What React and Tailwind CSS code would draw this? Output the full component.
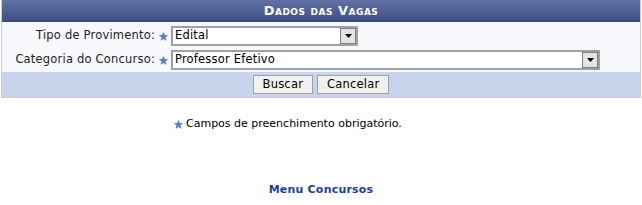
import React from "react";

const Star = ({ className = "" }) => (
  <svg width="9" height="9" viewBox="0 0 10 10" className={className}>
    <polygon
      points="5,0.5 6.2,3.6 9.5,3.8 6.9,5.9 7.8,9.3 5,7.4 2.2,9.3 3.1,5.9 0.5,3.8 3.8,3.6"
      fill="#5b7fc7"
      stroke="#3c5fa6"
      strokeWidth="0.5"
    />
  </svg>
);

const Select = ({ value, width }) => (
  <div
    className="flex h-[20px] items-stretch border-2 border-[#a0a0a0] bg-white"
    style={{ width }}
  >
    <div className="flex flex-1 items-center pl-[2px] text-black">{value}</div>
    <div className="flex w-[16px] items-center justify-center border border-[#808080] bg-[#e4e4e4]">
      <svg width="7" height="4" viewBox="0 0 7 4">
        <polygon points="0,0 7,0 3.5,4" fill="#000" />
      </svg>
    </div>
  </div>
);

export default function App() {
  return (
    <div
      className="h-[205px] w-[642px] bg-white text-[11.5px] tracking-[0.2px]"
      style={{ fontFamily: "Verdana, 'DejaVu Sans', sans-serif" }}
    >
      <div className="ml-[1px] w-[640px] border border-t-0 border-[#cccccc]">
        <div className="flex h-[22px] items-center justify-center border-b border-[#3a477c] bg-gradient-to-b from-[#6273a7] to-[#3f4d86]">
          <span className="text-[13px] font-bold tracking-[0.5px] text-white [font-variant:small-caps]">
            Dados das Vagas
          </span>
        </div>
        <div className="flex flex-col gap-[4px] bg-[#f8f9fc] pb-[2px] pt-[4px]">
          <div className="flex items-center">
            <div className="w-[153px] whitespace-nowrap text-right text-[#222]">Tipo de Provimento:</div>
            <div className="flex w-[16px] justify-center">
              <Star />
            </div>
            <Select value="Edital" width="187px" />
          </div>
          <div className="flex items-center">
            <div className="w-[153px] whitespace-nowrap text-right text-[#222]">Categoria do Concurso:</div>
            <div className="flex w-[16px] justify-center">
              <Star />
            </div>
            <Select value="Professor Efetivo" width="429px" />
          </div>
        </div>
        <div className="flex h-[25px] items-center justify-center gap-[4px] bg-[#c8d4ec]">
          <button className="h-[19px] border border-[#a0a0a0] bg-[#f0f0f0] px-[9px] text-black">
            Buscar
          </button>
          <button className="h-[19px] border border-[#a0a0a0] bg-[#f0f0f0] px-[9px] text-black">
            Cancelar
          </button>
        </div>
      </div>
      <div className="mt-[18px] flex items-center gap-[3px] pl-[174px] text-[11px] tracking-normal text-black">
        <Star />
        <span>Campos de preenchimento obrigatório.</span>
      </div>
      <div className="mt-[49px] text-center text-[11px] font-bold text-[#1c3f8f]">Menu Concursos</div>
    </div>
  );
}
